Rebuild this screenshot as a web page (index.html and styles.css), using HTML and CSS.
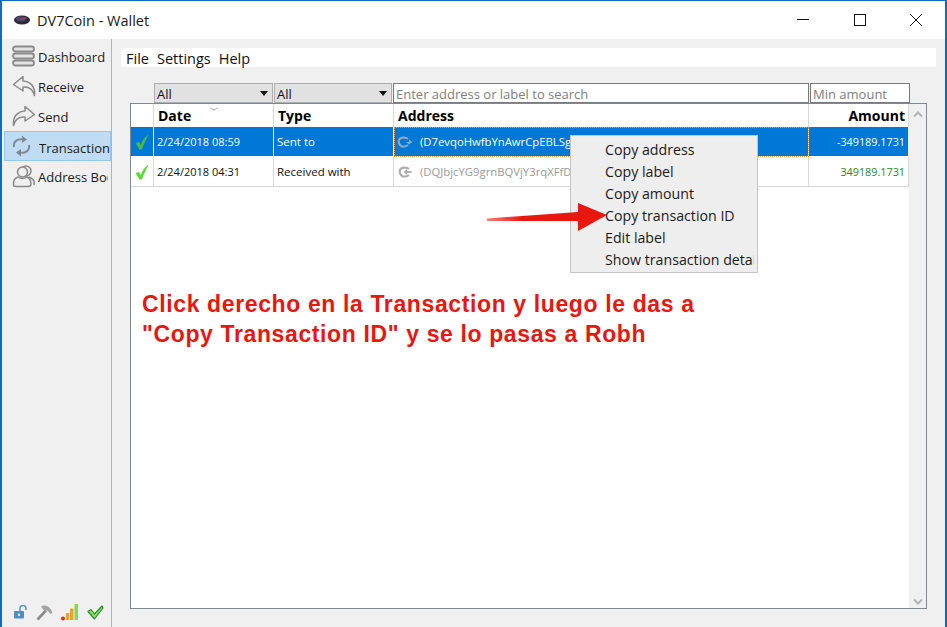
FILE: index.html
```html
<!DOCTYPE html>
<html lang="en">
<head>
<meta charset="utf-8">
<title>DV7Coin - Wallet</title>
<link rel="stylesheet" href="styles.css">
</head>
<body>
<div class="window">
  <header class="titlebar">
    <svg class="app-icon" width="18" height="12" viewBox="0 0 18 12"><ellipse cx="9" cy="6" rx="8" ry="4.600" fill="#2a2a3c"/><ellipse cx="8" cy="5" rx="5" ry="2.400" fill="#4a4a6a"/><path d="M8 5.500 L14 3.800" stroke="#b04050" stroke-width="1"/></svg>
    <span class="title">DV7Coin - Wallet</span>
    <div class="controls">
      <svg class="ctl" width="46" height="14" viewBox="0 0 46 14"><path d="M17 6.500H29" stroke="#111" fill="none"/></svg>
      <svg class="ctl" width="46" height="14" viewBox="0 0 46 14"><rect x="17.500" y="1.500" width="11" height="11" stroke="#111" fill="none"/></svg>
      <svg class="ctl" width="46" height="14" viewBox="0 0 46 14"><path d="M17 1 L29 13 M29 1 L17 13" stroke="#111" fill="none"/></svg>
    </div>
  </header>
  <div class="body">
    <nav class="sidebar">
      <a class="nav-item"><svg class="nav-icon" width="24" height="22" viewBox="0 0 24 22"><g fill="#e4e4e4" stroke="#8a8a8a" stroke-width="1.800"><rect x="1" y="1.500" width="21" height="5" rx="2.500"/><rect x="1" y="8.500" width="21" height="5" rx="2.500"/><rect x="1" y="15.500" width="21" height="5" rx="2.500"/></g></svg><span>Dashboard</span></a>
      <a class="nav-item"><svg class="nav-icon" width="24" height="22" viewBox="0 0 24 22"><path d="M11 1.500 L1.500 9.500 L11 16 V12 C17 11.500 21 14.500 22.500 20.500 C23.500 11 18 6.500 11 6 Z" fill="#efefef" stroke="#8a8a8a" stroke-width="1.500" stroke-linejoin="round"/></svg><span>Receive</span></a>
      <a class="nav-item"><svg class="nav-icon" width="24" height="22" viewBox="0 0 24 22"><path d="M13 1.500 L22.500 9.500 L13 16 V12 C7 11.500 3 14.500 1.500 20.500 C0.500 11 6 6.500 13 6 Z" fill="#efefef" stroke="#8a8a8a" stroke-width="1.500" stroke-linejoin="round"/></svg><span>Send</span></a>
      <a class="nav-item active"><svg class="nav-icon" width="20" height="22" viewBox="0 0 20 22"><g fill="none" stroke="#7d8a96" stroke-width="2"><path d="M2 12 C1 6 6 3.500 11 4.500"/><path d="M17 10 C18 16 13 18.500 8 17.500"/></g><path d="M10 0.500 L15 4.500 L10 8 Z M9 14 L4 17.500 L9 21.500 Z" fill="#7d8a96"/></svg><span>Transactions</span></a>
      <a class="nav-item"><svg class="nav-icon" width="24" height="24" viewBox="0 0 24 24"><g fill="#efefef" stroke="#8a8a8a" stroke-width="1.500"><circle cx="14" cy="7" r="5"/><path d="M17 13 C20 14 23 16 22 21"/><circle cx="10.500" cy="8" r="5"/><path d="M6 13 C3 14 1 16 1.500 21 C1.500 22.500 3 22.500 4 22.500 H16 C18 22.500 19 22 19 20 C19 16 17 14 15 13 C12 15 9 15 6 13 Z"/></g></svg><span>Address Book</span></a>
      <div class="status">
        <svg width="14" height="14" viewBox="0 0 14 14"><path d="M6 6V3.500a3 3 0 0 1 6 0V5" fill="none" stroke="#5a9ac8" stroke-width="1.600"/><rect x="0" y="6" width="10" height="7.500" rx="1" fill="#4a90c4"/><rect x="4" y="8.500" width="2" height="2.500" fill="#cfe4f2"/></svg>
        <svg width="17" height="17" viewBox="0 0 17 17"><path d="M1.500 15.500 L10 6.500" stroke="#8a8a8a" stroke-width="2.600"/><path d="M5 2.500 C9 0 14 2 16.500 8.500 L14 10 C13 7 10.500 5.500 8 6.500 Z" fill="#a4a4a4"/></svg>
        <svg width="18" height="17" viewBox="0 0 18 17"><circle cx="2" cy="14.500" r="2" fill="#d83020"/><rect x="5" y="9" width="3" height="7" fill="#f0a030"/><rect x="9" y="4.500" width="3.500" height="11.500" fill="#f0a030"/><rect x="13.500" y="0" width="3.500" height="16" fill="#88d850"/></svg>
        <svg width="17" height="15" viewBox="0 0 17 15"><path d="M1 6.500 L4 4.500 L7.500 9 L15 1 L16 3 L7.500 14 Z" fill="#8ee060" stroke="#2a8a30" stroke-width="1.200" stroke-linejoin="round"/></svg>
      </div>
    </nav>
    <main class="main">
      <div class="menubar"><span>File</span><span>Settings</span><span>Help</span></div>
      <div class="filters">
        <div class="combo date"><span>All</span><i class="caret"></i></div>
        <div class="combo type"><span>All</span><i class="caret"></i></div>
        <div class="input search">Enter address or label to search</div>
        <div class="input amount">Min amount</div>
      </div>
      <div class="table">
        <div class="rows">
          <div class="row head">
            <div class="cell status-col"></div>
            <div class="cell date-col">Date<i class="sort"></i></div>
            <div class="cell type-col">Type</div>
            <div class="cell addr-col">Address</div>
            <div class="cell amt-col">Amount</div>
          </div>
          <div class="row selected">
            <div class="cell status-col"><svg width="14" height="16" viewBox="0 0 14 16"><path d="M0.500 9 L4 8 L6 11 C7 6.500 10 3 13.500 0.500 C11.500 5 8.500 10 7 15.500 L4.500 15.500 Z" fill="#4cb848"/></svg></div>
            <div class="cell date-col">2/24/2018 08:59</div>
            <div class="cell type-col">Sent to</div>
            <div class="cell addr-col focus"><svg class="tx" width="16" height="12" viewBox="0 0 16 12"><path d="M11 3 C9 1 3 1 2 4 C1 8 4 11 7 10.500 C9 10.500 10 10 11 9" fill="none" stroke="#8fa6ba" stroke-width="2.200"/><path d="M9 6 H12 V3.500 L15.500 6 L12 8.500 Z" fill="#8fa6ba"/></svg><span>(D7evqoHwfbYnAwrCpEBLSg</span></div>
            <div class="cell amt-col">-349189.1731</div>
          </div>
          <div class="row">
            <div class="cell status-col"><svg width="14" height="16" viewBox="0 0 14 16"><path d="M0.500 9 L4 8 L6 11 C7 6.500 10 3 13.500 0.500 C11.500 5 8.500 10 7 15.500 L4.500 15.500 Z" fill="#58dc38"/></svg></div>
            <div class="cell date-col">2/24/2018 04:31</div>
            <div class="cell type-col">Received with</div>
            <div class="cell addr-col muted"><svg class="tx" width="16" height="12" viewBox="0 0 16 12"><path d="M12 3 C10 1 4 1 3 4 C2 8 5 11 8 10.500 C10 10.500 11 10 12 9" fill="none" stroke="#aeaeae" stroke-width="2.200"/><path d="M14.500 5 H10 V3 L6.500 6 L10 9 V7 H14.500 Z" fill="#aeaeae"/></svg><span>(DQJbjcYG9grnBQVjY3rqXFfD</span></div>
            <div class="cell amt-col positive">349189.1731</div>
          </div>
        </div>
        <div class="scrollbar">
          <svg width="12" height="8" viewBox="0 0 12 8"><path d="M2 6.500 L6 2.500 L10 6.500" fill="none" stroke="#b4b4b4" stroke-width="2"/></svg>
          <svg width="12" height="8" viewBox="0 0 12 8"><path d="M2 1.500 L6 5.500 L10 1.500" fill="none" stroke="#b4b4b4" stroke-width="2"/></svg>
        </div>
      </div>
    </main>
  </div>
  <ul class="menu">
    <li>Copy address</li>
    <li>Copy label</li>
    <li>Copy amount</li>
    <li>Copy transaction ID</li>
    <li>Edit label</li>
    <li>Show transaction details</li>
  </ul>
  <svg class="arrow" width="122" height="30" viewBox="0 0 122 30"><defs><linearGradient id="fade" x1="0" x2="1"><stop offset="0" stop-color="#e8170f" stop-opacity=".55"/><stop offset=".3" stop-color="#e8170f"/></linearGradient></defs><path d="M0 15.500 L91 9 L91 0 L120 12 L91 28 L91 18 L0 18 Z" fill="url(#fade)"/></svg>
  <p class="note">Click derecho en la Transaction y luego le das a<br>"Copy Transaction ID" y se lo pasas a Robh</p>
</div>
</body>
</html>
```
FILE: styles.css
```css
* { box-sizing: border-box; }
html, body { margin: 0; height: 100%; overflow: hidden; }
body { font-family: "Open Sans", "Noto Sans", sans-serif; color: #111; }

.window {
  position: relative;
  height: 627px;
  display: flex;
  flex-direction: column;
  border-top: 1px solid #0a6cc4;
  border-left: 2px solid #0a6cc4;
  border-right: 2px solid #0a6cc4;
  background: #f0f0f0;
}

.titlebar {
  flex: 0 0 38px;
  display: flex;
  align-items: center;
  background: #fff;
  padding-left: 11px;
}
.app-icon { margin-right: 6px; }
.title { font-size: 14.500px; color: #1a1a1a; }
.controls { margin-left: auto; display: flex; align-items: center; padding-right: 6px; }
.ctl { display: block; margin-left: 10.500px; }

.body { flex: 1; display: flex; min-height: 0; }

.sidebar {
  flex: 0 0 110px;
  border-right: 1px solid #b4b4b4;
  padding: 2px 0 0 2px;
  display: flex;
  flex-direction: column;
  overflow: hidden;
}
.nav-item {
  height: 30px;
  flex: none;
  display: flex;
  align-items: center;
  gap: 2px;
  padding: 0 3px 0 8px;
  font-size: 13px;
  white-space: nowrap;
  overflow: hidden;
  color: #1a1a1a;
}
.nav-item span { overflow: hidden; min-width: 0; padding-top: 2px; }
.nav-item.active {
  background: #c0dcf3;
  border: 1px solid #90c8f6;
  padding: 0 0 0 7px;
  gap: 7px;
}
.nav-item.active span { padding-top: 4px; }
.nav-icon { flex: none; }
.status {
  margin-top: auto;
  height: 30px;
  display: flex;
  align-items: center;
  gap: 8px;
  padding-left: 10px;
}

.main { flex: 1; display: flex; flex-direction: column; padding: 9px 9px 18px 9px; min-width: 0; }

.menubar {
  height: 19px;
  background: #fff;
  display: flex;
  align-items: center;
  gap: 8px;
  padding: 2px 0 0 5px;
  font-size: 14.500px;
  flex: none;
}

.filters {
  display: flex;
  height: 20px;
  margin: 16px 26px 0 33px;
  font-size: 13px;
  flex: none;
}
.combo {
  background: #e1e1e1;
  border: 1px solid #adadad;
  display: flex;
  align-items: center;
  justify-content: space-between;
  padding: 1px 4px 0 2px;
  margin-right: 1px;
}
.combo.date { width: 119px; }
.combo.type { width: 118px; }
.caret { border: 4px solid transparent; border-top: 5px solid #111; border-bottom: 0; }
.input {
  background: #fff;
  border: 1px solid #7a7a7a;
  color: #808080;
  padding: 1px 2px 0;
  line-height: 18px;
}
.input.search { flex: 1; margin-right: 1px; }
.input.amount { width: 100px; }

.table {
  flex: 1;
  display: flex;
  margin: 0 9px;
  background: #fff;
  border: 1px solid #828790;
  min-height: 0;
}
.rows { flex: 1; min-width: 0; }
.row {
  display: grid;
  grid-template-columns: 23px 120px 120px 415px 100px;
  height: 30px;
  font-size: 11.500px;
}
.row.head { height: 23px; font-size: 14px; font-weight: 700; color: #000; }
.cell {
  position: relative;
  display: flex;
  align-items: center;
  padding-left: 3px;
  border-right: 1px solid #d8d8d8;
  border-bottom: 1px solid #d8d8d8;
  white-space: nowrap;
  overflow: hidden;
  min-width: 0;
}
.head .cell { border-bottom: 0; padding-left: 4px; }
.status-col { padding-left: 4px; }
.date-col { font-size: 11px; }
.head .date-col { font-size: 14px; }
.amt-col { justify-content: flex-end; padding-right: 3px; font-size: 10.800px; }
.head .amt-col { font-size: 14px; }
.selected .cell { background: #0078d7; color: #fff; border-bottom-color: #fff; border-right-color: #e4eff8; }
.focus { outline: 1px dotted #f0a040; outline-offset: -1px; }
.positive { color: #1f8a1f; }
.muted { color: #9a9a9a; }
.tx { margin: 0 6px 0 0; flex: none; }
.addr-col span { font-size: 11.300px; padding-left: 1px; }
.sort {
  position: absolute;
  left: 57px;
  top: 1px;
  width: 6px;
  height: 6px;
  border-right: 1px solid #a8a8a8;
  border-bottom: 1px solid #a8a8a8;
  transform: scaleY(.6) rotate(45deg);
}
.scrollbar {
  flex: 0 0 17px;
  background: #f0f0f0;
  display: flex;
  flex-direction: column;
  justify-content: space-between;
  align-items: center;
  padding: 6px 0 2px;
}
.scrollbar svg { display: block; }

.menu {
  position: absolute;
  left: 568px;
  top: 134px;
  width: 188px;
  height: 138px;
  margin: 0;
  padding: 3px 3px 3px 0;
  list-style: none;
  background: #eeeeee;
  border: 1px solid #c4c4c4;
  font-size: 14.200px;
  color: #1a1a1a;
  overflow: hidden;
}
.menu li { height: 22px; line-height: 22px; padding-left: 34px; white-space: nowrap; overflow: hidden; }

.arrow { position: absolute; left: 485px; top: 202px; }

.note {
  position: absolute;
  left: 140px;
  top: 288px;
  margin: 0;
  font-family: "Liberation Sans", Arial, sans-serif;
  font-weight: 700;
  font-size: 23px;
  line-height: 30px;
  color: #e8170f;
  letter-spacing: .62px;
  white-space: nowrap;
}
```
